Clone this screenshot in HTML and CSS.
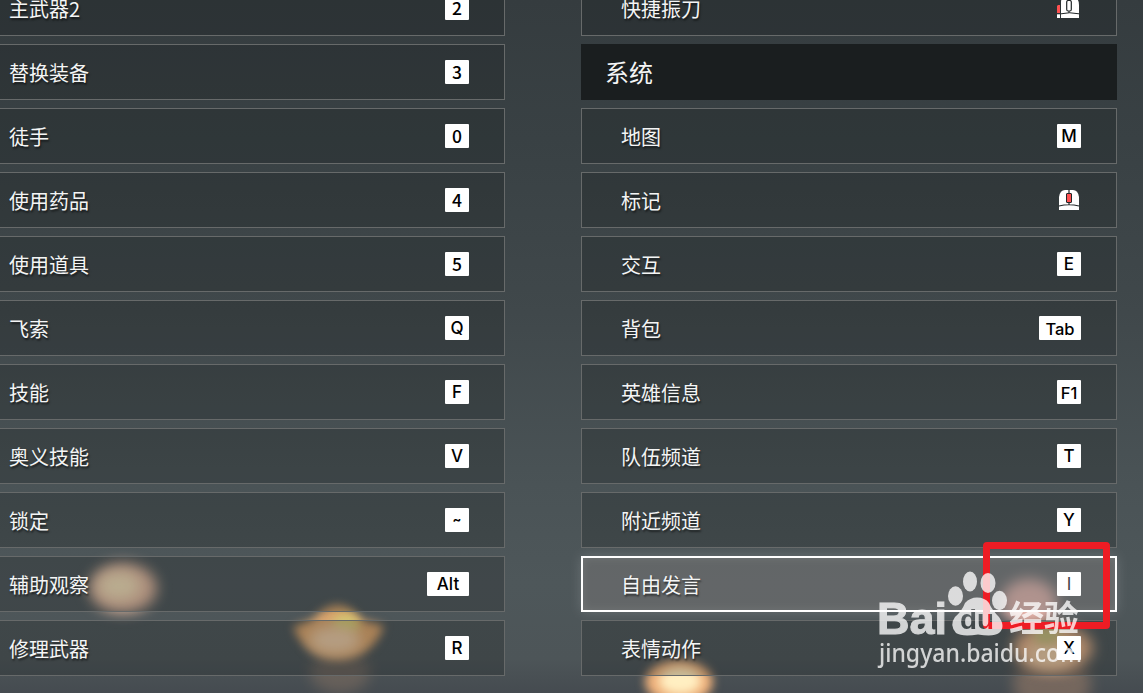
FILE: index.html
```html
<!DOCTYPE html>
<html lang="zh-CN">
<head>
<meta charset="utf-8">
<title>按键设置</title>
<link rel="stylesheet" href="styles.css">
</head>
<body>
<div class="scene">
  <svg class="lanterns" width="1143" height="693" aria-hidden="true">
    <defs>
      <filter id="soft" x="-60%" y="-60%" width="220%" height="220%" color-interpolation-filters="sRGB"><feGaussianBlur stdDeviation="7"/></filter>
      <filter id="tight" x="-60%" y="-60%" width="220%" height="220%" color-interpolation-filters="sRGB"><feGaussianBlur stdDeviation="5"/></filter>
    </defs>
    <ellipse cx="123" cy="588" rx="34" ry="25" fill="#dcb39b" filter="url(#soft)"/>
    <ellipse cx="119" cy="586" rx="21" ry="14" fill="#ecd9b4" filter="url(#soft)"/>
    <ellipse cx="340" cy="672" rx="30" ry="22" fill="#a08068" opacity=".35" filter="url(#soft)"/>
    <path d="M293 627 L312 620 Q338 590 362 620 L384 626 Q372 659 338 659 Q306 659 293 627Z" fill="#d8a26a" filter="url(#tight)"/>
    <ellipse cx="346" cy="624" rx="13" ry="10" fill="#d0c66e" filter="url(#tight)"/>
    <ellipse cx="335" cy="640" rx="26" ry="14" fill="#e6c6a2" filter="url(#soft)"/>
    <ellipse cx="679" cy="682" rx="34" ry="22" fill="#f0b27c" filter="url(#tight)"/>
    <ellipse cx="680" cy="681" rx="21" ry="13" fill="#ffefc2" filter="url(#tight)"/>
    <ellipse cx="1029" cy="602" rx="28" ry="23" fill="#e8b0a6" filter="url(#soft)"/>
    <ellipse cx="1052" cy="684" rx="39" ry="30" fill="#9c7d68" opacity=".55" filter="url(#soft)"/>
    <ellipse cx="1053" cy="648" rx="40" ry="23" fill="#e0ac84" filter="url(#soft)"/>
    <ellipse cx="1050" cy="655" rx="24" ry="12" fill="#e6c8a4" filter="url(#soft)"/>
    <ellipse cx="1047" cy="636" rx="14" ry="8" fill="#bdb879" filter="url(#tight)"/>
  </svg>

  <main class="columns">
    <section class="column column-left">
      <div class="row"><span class="label">主武器2</span><kbd class="key digit">2</kbd></div>
      <div class="row"><span class="label">替换装备</span><kbd class="key digit">3</kbd></div>
      <div class="row"><span class="label">徒手</span><kbd class="key digit">0</kbd></div>
      <div class="row"><span class="label">使用药品</span><kbd class="key digit">4</kbd></div>
      <div class="row"><span class="label">使用道具</span><kbd class="key digit">5</kbd></div>
      <div class="row"><span class="label">飞索</span><kbd class="key">Q</kbd></div>
      <div class="row"><span class="label">技能</span><kbd class="key">F</kbd></div>
      <div class="row"><span class="label">奥义技能</span><kbd class="key">V</kbd></div>
      <div class="row"><span class="label">锁定</span><kbd class="key small">~</kbd></div>
      <div class="row"><span class="label">辅助观察</span><kbd class="key wide">Alt</kbd></div>
      <div class="row"><span class="label">修理武器</span><kbd class="key">R</kbd></div>
    </section>

    <section class="column column-right">
      <div class="row"><span class="label">快捷振刀</span>
        <svg class="mouse" viewBox="0 0 24 24" width="24" height="24">
          <path d="M4 22V6Q4 2 8 2H17Q22 2 22 9V22Z" fill="#fff"/>
          <path d="M0 10L1 9H3V17H0Z" fill="#ff5050"/>
          <path d="M0 18.300H3V22H0Z" fill="#fff"/>
          <path d="M12 1V5M12 15V17M4 17.800Q12 15.700 22 17.800" fill="none" stroke="#202628" stroke-width="1"/>
          <rect x="9.700" y="4.500" width="4.600" height="10.500" rx="1.500" fill="#fff" stroke="#202628" stroke-width="1.200"/>
        </svg>
      </div>
      <h2 class="heading">系统</h2>
      <div class="row"><span class="label">地图</span><kbd class="key">M</kbd></div>
      <div class="row"><span class="label">标记</span>
        <svg class="mouse" viewBox="0 0 24 24" width="24" height="24">
          <path d="M2 22V9Q3 2 8 2H16Q21 2 22 9V22Z" fill="#fff"/>
          <path d="M12 1.500V6M12 14V17M2 18Q12 15.500 22 18" fill="none" stroke="#202628" stroke-width="1.200"/>
          <rect x="9.500" y="5.500" width="5" height="9" rx=".5" fill="#ff5050" stroke="#202628" stroke-width="1"/>
        </svg>
      </div>
      <div class="row"><span class="label">交互</span><kbd class="key">E</kbd></div>
      <div class="row"><span class="label">背包</span><kbd class="key wide low">Tab</kbd></div>
      <div class="row"><span class="label">英雄信息</span><kbd class="key low">F1</kbd></div>
      <div class="row"><span class="label">队伍频道</span><kbd class="key">T</kbd></div>
      <div class="row"><span class="label">附近频道</span><kbd class="key">Y</kbd></div>
      <div class="row selected"><span class="label">自由发言</span><kbd class="key thin">I</kbd></div>
      <div class="row"><span class="label">表情动作</span><kbd class="key">X</kbd></div>
    </section>
  </main>

  <div class="callout"></div>

  <svg class="watermark" width="220" height="110" viewBox="870 565 220 110">
    <defs>
      <mask id="knockout" maskUnits="userSpaceOnUse" x="945" y="590" width="65" height="50">
        <rect x="945" y="590" width="65" height="50" fill="#fff"/>
        <text x="960" y="629" class="du" textLength="34" lengthAdjust="spacingAndGlyphs">du</text>
      </mask>
    </defs>
    <g class="mark">
      <ellipse cx="955.500" cy="596" rx="7.500" ry="9.700"/>
      <ellipse cx="970" cy="581.500" rx="7" ry="10"/>
      <ellipse cx="988" cy="583" rx="7.500" ry="10"/>
      <ellipse cx="999.500" cy="600.500" rx="7.500" ry="9.700"/>
      <path mask="url(#knockout)" d="M965 603Q970 597.500 977 597.500Q985 597.500 989 603Q992 610 999 617Q1006 627 999 633Q994 637 978 634.500Q962 637 956 633Q949 625 955 617Q962 611 965 603Z"/>
      <text x="877" y="634" class="brand" textLength="70" lengthAdjust="spacingAndGlyphs">Bai</text>
      <text x="1009" y="631" class="brand-cn" textLength="70" lengthAdjust="spacingAndGlyphs">经验</text>
      <text x="879" y="662" class="site" textLength="203" lengthAdjust="spacingAndGlyphs">jingyan.baidu.com</text>
    </g>
  </svg>
</div>
</body>
</html>
```
FILE: styles.css
```css
* { box-sizing: border-box; }

body {
  margin: 0;
  overflow: hidden;
  font-family: "Noto Sans CJK SC", sans-serif;
  color: #f4f5f5;
}

.scene {
  position: relative;
  width: 1143px;
  height: 693px;
  overflow: hidden;
  background: linear-gradient(#353c3f 0, #394144 20%, #40484b 45%, #4a5356 70%, #4e575a 84%, #4d5558 95%, #454b50 100%);
}

.lanterns { position: absolute; inset: 0; }

.columns {
  position: relative;
  display: grid;
  grid-template-columns: 505px 536px;
  column-gap: 76px;
  margin-top: -20px;
}

.column {
  display: flex;
  flex-direction: column;
  gap: 8px;
}

.row {
  display: flex;
  align-items: center;
  justify-content: space-between;
  height: 56px;
  padding: 0 35px 0 39px;
  border: 1px solid #676a6a;
  background: rgba(18, 20, 21, .23);
}

.column-left .row {
  padding-left: 9px;
  border-left: 0;
}

.label {
  font-size: 20px;
  line-height: 30px;
  padding-top: 2px;
  text-shadow: 1px 2px 2px rgba(0, 0, 0, .55);
}

.heading {
  height: 56px;
  margin: 0;
  padding: 0 24px;
  background: #1a1e1f;
  font-size: 24px;
  font-weight: 400;
  line-height: 55px;
}

.key {
  display: flex;
  align-items: center;
  justify-content: center;
  width: 24px;
  height: 24px;
  border-radius: 1px;
  background: #fff;
  color: #000;
  font: 500 17px/24px Inter, "Noto Sans CJK SC", sans-serif;
}

.key.digit { font: 500 17.5px/24px "Noto Sans CJK SC", sans-serif; }
.key.small { font-size: 13px; font-weight: 700; padding-bottom: 3px; }
.key.thin { font-weight: 400; color: #444; }
.key.wide { width: 42px; }
.key.low { padding-top: 2px; font-size: 16.5px; }

.row.selected {
  border: 2px solid #fff;
  padding: 0 34px 0 38px;
  background: rgba(120, 118, 118, .5);
  box-shadow: 0 0 12px rgba(255, 255, 255, .16), inset 0 0 10px rgba(255, 255, 255, .1);
}

.callout {
  position: absolute;
  left: 983px;
  top: 542px;
  width: 127px;
  height: 87px;
  border: 7px solid #ee1c24;
  border-radius: 4px;
}

.watermark {
  position: absolute;
  left: 870px;
  top: 565px;
}

.mark { fill: #fff; opacity: .77; }
.brand { font: 700 45px "Liberation Sans", sans-serif; stroke: #fff; stroke-width: 1px; }
.brand-cn { font: 700 35px "Noto Sans CJK SC", sans-serif; }
.site { font: 500 25px "Noto Sans", sans-serif; }
.du { font: 700 27px "Liberation Sans", sans-serif; fill: #000; }
```
